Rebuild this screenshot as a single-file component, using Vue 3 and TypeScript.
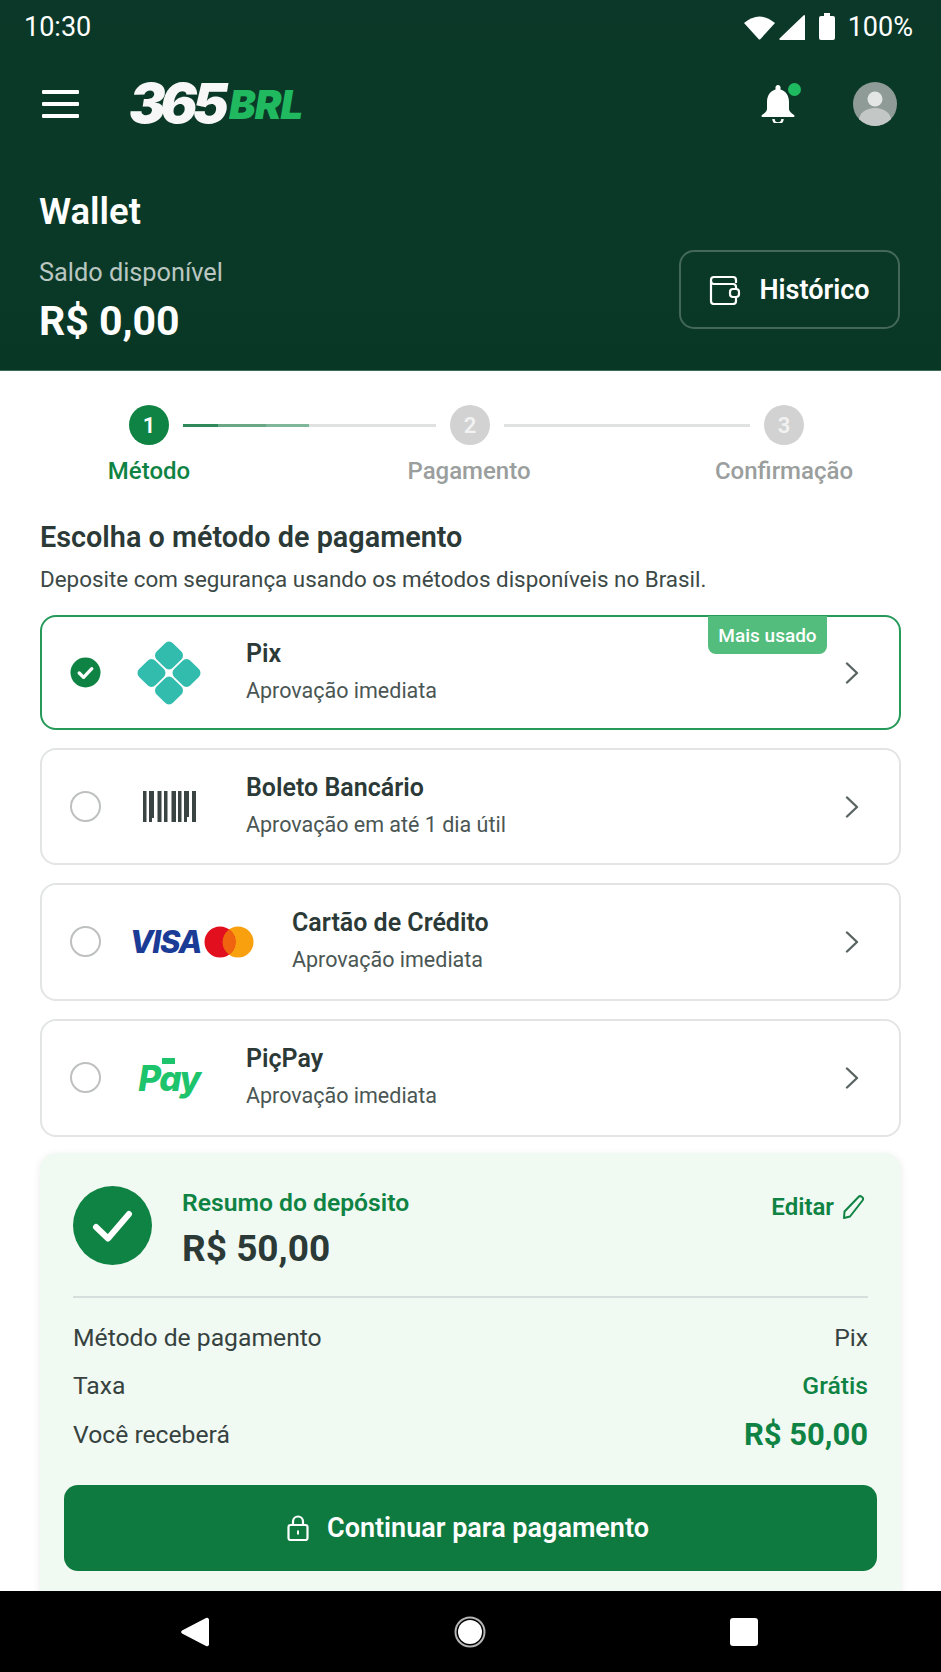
<script setup lang="ts">
type Method = {
  id: string
  title: string
  sub: string
  selected?: boolean
  wide?: boolean
}

const methods: Method[] = [
  { id: 'pix', title: 'Pix', sub: 'Aprovação imediata', selected: true },
  { id: 'boleto', title: 'Boleto Bancário', sub: 'Aprovação em até 1 dia útil' },
  { id: 'card', title: 'Cartão de Crédito', sub: 'Aprovação imediata', wide: true },
  { id: 'picpay', title: 'PiçPay', sub: 'Aprovação imediata' },
]

// x, width, height of each barcode stroke
const bars: [number, number, number][] = [
  [0, 3.500, 31], [6, 3, 31], [9, 2, 27], [14.500, 4, 31], [21, 3.500, 31], [28.500, 4.500, 31],
  [35, 3.500, 31], [41, 3, 31], [44, 2, 26], [49, 4, 31],
]

const pixCenters = [[32, 14.500], [14.500, 32], [49.500, 32], [32, 49.500]]

const summaryRows = [
  { label: 'Método de pagamento', value: 'Pix', kind: '' },
  { label: 'Taxa', value: 'Grátis', kind: 'free' },
  { label: 'Você receberá', value: 'R$ 50,00', kind: 'total' },
]
</script>

<template>
  <div class="screen">
    <div class="page">
      <header class="hero">
        <div class="status">
          <span class="clock">10:30</span>
          <div class="status-right">
            <svg width="31" height="25" viewBox="0 0 31 25"><path d="M0 8Q15.500-5 31 8L16.500 24Q15.500 25 14.500 24Z" fill="#fff" /></svg>
            <svg class="signal" width="26" height="25" viewBox="0 0 26 25"><path d="M25 0a1 1 0 0 1 1 1v24H2a1 1 0 0 1-1-2Z" fill="#fff" /></svg>
            <svg class="battery" width="16" height="27" viewBox="0 0 16 27"><path d="M5 0h6v3h3a2 2 0 0 1 2 2v20a2 2 0 0 1-2 2H2a2 2 0 0 1-2-2V5a2 2 0 0 1 2-2h3Z" fill="#fff" /></svg>
            <span class="percent">100%</span>
          </div>
        </div>

        <div class="topbar">
          <div class="burger"><i></i><i></i><i></i></div>
          <div class="logo"><span class="logo-num">365</span><span class="logo-brl">BRL</span></div>
          <div class="top-actions">
            <div class="bell">
              <svg width="34" height="38" viewBox="0 0 34 38">
                <path d="M17 0a2.500 2.500 0 0 1 2.500 3v1.500C25 6 28 11 28 17v7c0 2 2 4 5 6 1 1 .5 2-1 2H2c-1.500 0-2-1-1-2 3-2 5-4 5-6v-7C6 11 9 6 14.500 4.500V3A2.500 2.500 0 0 1 17 0Z" fill="#fff" />
                <path d="M12.500 34a4.500 4.500 0 0 0 9 0" fill="none" stroke="#fff" stroke-width="2.500" />
              </svg>
              <span class="bell-dot"></span>
            </div>
            <svg class="avatar" width="44" height="44" viewBox="0 0 44 44">
              <defs><clipPath id="avatar-clip"><circle cx="22" cy="22" r="22" /></clipPath></defs>
              <circle cx="22" cy="22" r="22" fill="#8f9b97" />
              <circle cx="22" cy="17" r="7.500" fill="#e4e6e5" />
              <ellipse cx="22" cy="38" rx="16" ry="12" fill="#c3c8c6" clip-path="url(#avatar-clip)" />
            </svg>
          </div>
        </div>

        <div class="wallet">
          <div>
            <h1 class="wallet-title">Wallet</h1>
            <div class="balance-label">Saldo disponível</div>
            <div class="balance">R$ 0,00</div>
          </div>
          <button class="history" type="button">
            <svg width="32" height="30" viewBox="0 0 32 30" fill="none" stroke="#fff" stroke-width="2.200">
              <path d="M27 8V5a3 3 0 0 0-3-3H5a3 3 0 0 0-3 3v21a3 3 0 0 0 3 3h19a3 3 0 0 0 3-3v-3" stroke-linejoin="round" />
              <path d="M2 6a3 3 0 0 0 3 3h19a3 3 0 0 1 3 3v2" />
              <rect x="21" y="14" width="9" height="8" rx="3" />
            </svg>
            <span>Histórico</span>
          </button>
        </div>
      </header>

      <main class="content">
        <div class="steps">
          <span class="step-dot active">1</span>
          <span class="step-line first"></span>
          <span class="step-dot">2</span>
          <span class="step-line"></span>
          <span class="step-dot">3</span>
        </div>
        <div class="step-labels">
          <span class="active">Método</span>
          <span>Pagamento</span>
          <span>Confirmação</span>
        </div>

        <section class="intro">
          <h2>Escolha o método de pagamento</h2>
          <p>Deposite com segurança usando os métodos disponíveis no Brasil.</p>
        </section>

        <div class="methods">
          <div v-for="m in methods" :key="m.id" class="method" :class="[m.id, { selected: m.selected }]">
            <span v-if="m.selected" class="badge">Mais usado</span>
            <svg v-if="m.selected" class="radio-on" width="32" height="32" viewBox="0 0 32 32">
              <circle cx="16" cy="16" r="15.500" fill="#0f8343" />
              <path d="M9.500 16.500l4.500 4.500 8.500-9" fill="none" stroke="#fff" stroke-width="3.400" stroke-linecap="round" stroke-linejoin="round" />
            </svg>
            <span v-else class="radio"></span>

            <div class="method-logo" :class="{ wide: m.wide }">
              <svg v-if="m.id === 'pix'" width="64" height="64" viewBox="0 0 64 64" fill="#32bcad">
                <rect v-for="c in pixCenters" :key="c[0] + '-' + c[1]" :x="c[0] - 11.500" :y="c[1] - 11.500" width="23" height="23" rx="5.500" :transform="`rotate(45 ${c[0]} ${c[1]})`" />
              </svg>
              <svg v-else-if="m.id === 'boleto'" width="53" height="31" viewBox="0 0 53 31" fill="#3a4543">
                <rect v-for="b in bars" :key="b[0]" :x="b[0]" y="0" :width="b[1]" :height="b[2]" />
              </svg>
              <template v-else-if="m.id === 'card'">
                <span class="visa">VISA</span>
                <svg class="mastercard" width="50" height="32" viewBox="0 0 50 32">
                  <circle cx="34" cy="16" r="15.500" fill="#f9a00f" />
                  <circle cx="16" cy="16" r="15.500" fill="#e2101f" />
                  <path d="M25 3.400a15.500 15.500 0 0 1 0 25.200a15.500 15.500 0 0 1 0-25.200Z" fill="#f0640f" />
                </svg>
              </template>
              <span v-else class="pay">Pay</span>
            </div>

            <div class="method-text">
              <div class="method-title">{{ m.title }}</div>
              <div class="method-sub">{{ m.sub }}</div>
            </div>

            <svg class="chevron" width="14" height="22" viewBox="0 0 14 22" fill="none" stroke="#5a6462" stroke-width="2.400" stroke-linecap="round" stroke-linejoin="round">
              <path d="M2 1.500 12 11 2 20.500" />
            </svg>
          </div>
        </div>

        <section class="summary">
          <div class="summary-head">
            <svg width="79" height="79" viewBox="0 0 79 79">
              <circle cx="39.500" cy="39.500" r="39.500" fill="#0f8343" />
              <path d="M23 41l12 11.500L56 28" fill="none" stroke="#fff" stroke-width="6" stroke-linecap="round" stroke-linejoin="round" />
            </svg>
            <div class="summary-amount">
              <div class="summary-title">Resumo do depósito</div>
              <div class="summary-value">R$ 50,00</div>
            </div>
            <div class="edit">
              <span>Editar</span>
              <svg width="23" height="24" viewBox="0 0 23 24" fill="none" stroke="#0f8343" stroke-width="2" stroke-linejoin="round">
                <path d="M16 2.500a2.700 2.700 0 0 1 4.500 3L8 21.500 2 23l.5-6.500Z" />
              </svg>
            </div>
          </div>
          <div class="divider"></div>
          <div v-for="r in summaryRows" :key="r.label" class="summary-row">
            <span>{{ r.label }}</span>
            <span :class="r.kind">{{ r.value }}</span>
          </div>
          <button class="continue" type="button">
            <svg width="22" height="26" viewBox="0 0 22 26" fill="none" stroke="#fff" stroke-width="2.200">
              <rect x="1.500" y="10" width="19" height="15" rx="2" />
              <path d="M6 10V6.500a5 5 0 0 1 10 0V10" />
              <rect x="10" y="15.500" width="2" height="4" fill="#fff" stroke="none" />
            </svg>
            <span>Continuar para pagamento</span>
          </button>
        </section>
      </main>
    </div>

    <nav class="navbar">
      <svg width="28" height="30" viewBox="0 0 28 30"><path d="M25 1a2 2 0 0 1 3 1.500v25a2 2 0 0 1-3 1.500L1 16.500a2 2 0 0 1 0-3Z" fill="#fff" /></svg>
      <svg width="32" height="32" viewBox="0 0 32 32">
        <circle cx="16" cy="16" r="14.500" fill="#000" stroke="#b5b5b5" stroke-width="2" />
        <circle cx="16" cy="16" r="12" fill="#fff" />
      </svg>
      <span class="nav-square"></span>
    </nav>
  </div>
</template>

<style scoped>
.screen {
  width: 941px;
  height: 1672px;
  display: flex;
  flex-direction: column;
  overflow: hidden;
  background: #fff;
  font-family: Roboto, "Noto Sans", sans-serif;
  color: #2b3a37;
}

.page {
  flex: 1;
  min-height: 0;
  overflow: hidden;
}

.hero {
  height: 371px;
  padding: 0 41px 0 39px;
  box-sizing: border-box;
  color: #fff;
  background: linear-gradient(180deg, #0b3828 0%, #0a3a27 60%, #093726 100%);
  border-bottom: 1px solid #3d6c58;
}

.status {
  height: 54px;
  margin: 0 -13px 0 -15px;
  display: flex;
  align-items: center;
  justify-content: space-between;
  font-size: 27px;
}

.status-right {
  display: flex;
  align-items: center;
}

.signal {
  margin-left: 4px;
}

.battery {
  margin-left: 14px;
  margin-top: -2px;
}

.percent {
  margin-left: 13px;
}

.topbar {
  height: 99px;
  display: flex;
  align-items: center;
}

.burger {
  width: 37px;
  margin-left: 3px;
  display: flex;
  flex-direction: column;
  gap: 8px;
}

.burger i {
  display: block;
  height: 4px;
  background: #fff;
  border-radius: 1px;
}

.logo {
  margin-left: 50px;
  margin-top: 4px;
  display: flex;
  align-items: baseline;
  font-family: Inter, sans-serif;
  font-style: italic;
  font-weight: 900;
}

.logo-num {
  font-size: 55px;
  line-height: 50px;
  letter-spacing: -5.500px;
  color: #f6f7f6;
}

.logo-brl {
  margin-left: 6px;
  font-size: 40px;
  line-height: 50px;
  letter-spacing: -1px;
  color: #20b95f;
  transform: translateY(-4px);
}

.top-actions {
  margin-left: auto;
  display: flex;
  align-items: center;
  margin-right: 3px;
}

.bell {
  position: relative;
  width: 34px;
  height: 38px;
}

.bell-dot {
  position: absolute;
  right: -6px;
  top: -2px;
  width: 13px;
  height: 13px;
  border-radius: 50%;
  background: #1fbb60;
}

.avatar {
  margin-left: 58px;
}

.wallet {
  margin-top: 39px;
  display: flex;
  justify-content: space-between;
  align-items: flex-end;
}

.wallet-title {
  margin: 0;
  font-size: 36.500px;
  line-height: 40px;
  font-weight: 600;
}

.balance-label {
  margin-top: 26px;
  font-size: 25.300px;
  line-height: 30px;
  color: rgba(255, 255, 255, 0.72);
}

.balance {
  margin-top: 9px;
  font-size: 41px;
  line-height: 48px;
  font-weight: 700;
}

.history {
  width: 221px;
  height: 79px;
  margin-bottom: 16px;
  display: flex;
  align-items: center;
  justify-content: center;
  gap: 18px;
  background: transparent;
  border: 2px solid rgba(255, 255, 255, 0.24);
  border-radius: 15px;
  color: #fff;
  font-family: inherit;
  font-size: 27px;
  font-weight: 600;
}

.content {
  padding: 34px 40px 0;
}

.steps {
  margin-left: 89px;
  width: 675px;
  display: flex;
  align-items: center;
  gap: 14px;
}

.step-dot {
  flex: none;
  width: 40px;
  height: 40px;
  border-radius: 50%;
  display: flex;
  align-items: center;
  justify-content: center;
  background: #d2d2d2;
  color: #f2f2f2;
  font-size: 22px;
  font-weight: 600;
}

.step-dot.active {
  background: #0f8343;
  color: #fff;
}

.step-line {
  flex: 1;
  height: 3px;
  background: #dfe2e1;
}

.step-line.first {
  flex: none;
  width: 253px;
  background: linear-gradient(90deg, #2e8a5a 0 14%, #6aa885 14% 33%, #80b69a 33% 50%, #dfe2e1 50%);
}

.step-labels {
  margin: 12px 0 0 -40px;
  display: grid;
  grid-template-columns: 298px 342px 288px;
  text-align: center;
  font-size: 24px;
  line-height: 28px;
  font-weight: 500;
  color: #9a9e9d;
}

.step-labels .active {
  color: #0f8343;
}

.intro {
  margin-top: 35px;
}

.intro h2 {
  margin: 0;
  font-size: 28.800px;
  line-height: 34px;
  font-weight: 600;
  color: #2b3a37;
}

.intro p {
  margin: 10px 0 0;
  font-size: 22.400px;
  line-height: 30px;
  color: #3c4946;
}

.methods {
  margin-top: 21px;
  display: flex;
  flex-direction: column;
  gap: 18px;
}

.method {
  position: relative;
  height: 115px;
  box-sizing: border-box;
  padding: 0 40px 0 28px;
  display: flex;
  align-items: center;
  background: #fff;
  border: 2px solid #e3e5e4;
  border-radius: 16px;
}

.method.boleto {
  height: 117px;
}

.method.card {
  height: 117.500px;
}

.method.picpay {
  height: 118.500px;
}

.method.selected {
  border-color: #259a59;
}

.badge {
  position: absolute;
  top: -1px;
  right: 72px;
  width: 119px;
  height: 38px;
  display: flex;
  align-items: center;
  justify-content: center;
  background: #52bd7c;
  color: #fff;
  border-radius: 0 0 8px 8px;
  font-size: 19px;
  font-weight: 500;
}

.radio,
.radio-on {
  flex: none;
  width: 31px;
  height: 31px;
}

.radio {
  box-sizing: border-box;
  border: 2.500px solid #bdc0bf;
  border-radius: 50%;
}

.method-logo {
  flex: none;
  width: 88px;
  margin: 0 33px 0 24px;
  display: flex;
  align-items: center;
  justify-content: center;
}

.method-logo.wide {
  width: 134px;
  gap: 3px;
}

.visa {
  color: #1b3c96;
  font-family: Inter, sans-serif;
  font-size: 31px;
  font-style: italic;
  font-weight: 800;
  letter-spacing: -1.200px;
  line-height: 32px;
}

.mastercard {
  flex: none;
}

.pay {
  position: relative;
  color: #1ec46c;
  font-family: Inter, sans-serif;
  font-size: 35px;
  line-height: 44px;
  font-style: italic;
  font-weight: 800;
  letter-spacing: -1.500px;
}

.pay::after {
  content: "";
  position: absolute;
  left: 24px;
  top: 2px;
  width: 13px;
  height: 6px;
  background: #1ec46c;
}

.method-text {
  flex: 1;
}

.method-title {
  font-size: 25px;
  line-height: 30px;
  font-weight: 600;
  color: #2b3a37;
}

.method-sub {
  margin-top: 7px;
  font-size: 21.500px;
  line-height: 30px;
  color: #4a5653;
}

.chevron {
  flex: none;
}

.summary {
  margin-top: 16px;
  padding: 33px 33px 40px;
  height: 470px;
  box-sizing: border-box;
  background: #f1f9f3;
  border-radius: 16px;
  box-shadow: 0 2px 8px rgba(0, 0, 0, 0.08);
}

.summary-head {
  display: flex;
  align-items: flex-start;
}

.summary-amount {
  margin-left: 30px;
}

.summary-title {
  margin-top: 1px;
  font-size: 24.700px;
  line-height: 32px;
  font-weight: 600;
  color: #0f8343;
}

.summary-value {
  margin-top: 8px;
  font-size: 37px;
  line-height: 44px;
  font-weight: 700;
  color: #2b3a37;
}

.edit {
  margin-left: auto;
  margin-top: 5px;
  margin-right: 3px;
  display: flex;
  align-items: center;
  gap: 8px;
  font-size: 24px;
  line-height: 32px;
  font-weight: 600;
  color: #0f8343;
}

.divider {
  height: 2px;
  margin-top: 25px;
  background: #d6dfdb;
}

.summary-row {
  margin-top: 12.500px;
  height: 36px;
  display: flex;
  align-items: center;
  justify-content: space-between;
  font-size: 24.700px;
  color: #36423f;
}

.divider + .summary-row {
  margin-top: 21px;
}

.free {
  color: #0f8343;
  font-weight: 500;
}

.total {
  color: #0f8343;
  font-size: 31px;
  font-weight: 700;
}

.continue {
  width: 813px;
  height: 86px;
  margin: 33px -9px 0;
  padding: 0 5px 0 0;
  display: flex;
  align-items: center;
  justify-content: center;
  gap: 18px;
  background: #0f7a3f;
  border: 0;
  border-radius: 14px;
  color: #fff;
  font-family: inherit;
  font-size: 27px;
  font-weight: 600;
}

.navbar {
  flex: none;
  height: 81px;
  padding: 0 183px 0 181px;
  display: flex;
  align-items: center;
  justify-content: space-between;
  background: #000;
}

.nav-square {
  width: 28px;
  height: 28px;
  background: #fff;
  border-radius: 3px;
}
</style>

<style>
html,
body {
  margin: 0;
  background: #fff;
}
</style>
